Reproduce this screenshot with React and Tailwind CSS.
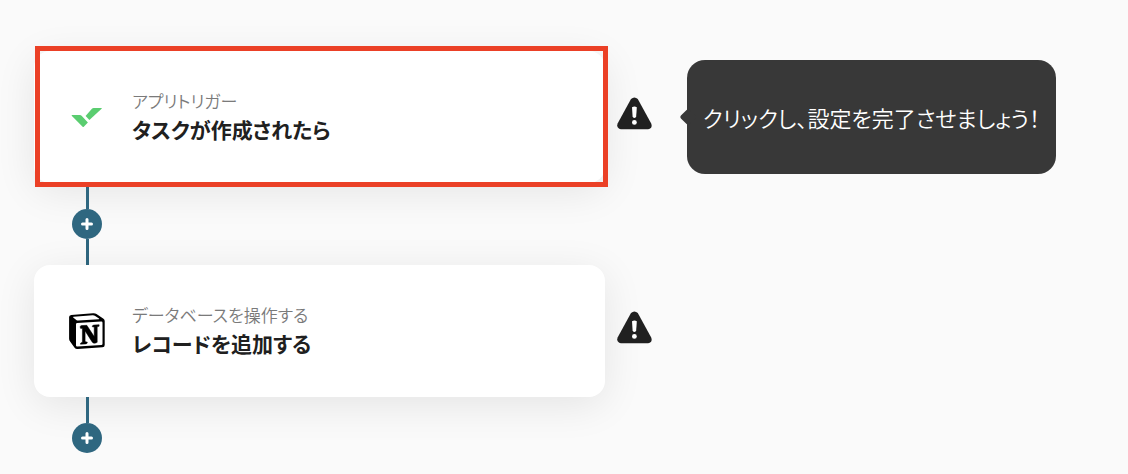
function TaskLogo() {
  return (
    <svg viewBox="0 0 36 36" className="h-9 w-9 shrink-0" fill="#5acd70" aria-hidden="true">
      <path d="M3.2 16h7.7q1 0 1.7.7l6.3 6.9-4.1 4.1q-.6.6-1.2 0L2.7 16.8q-.5-.7.5-.8Z" />
      <path d="M16.6 16.9l6.1-6.9q.8-.9 2-.9h7.6q.9 0 .3.6L20.4 21.1Z" />
    </svg>
  );
}

function NotionLogo() {
  return (
    <svg viewBox="0 0 36 36" className="h-9 w-9 shrink-0" aria-hidden="true">
      <path
        d="M2.2 1.9 24 .2q2-.2 3.5.8l7 4.8q1.2.8 1.2 2.3v23.8q0 2.1-2.2 2.3L8.7 36q-2 .1-3.1-1.3l-4.5-6.1Q.1 27.3.1 25.7V4.1q0-2 2.1-2.2Z"
        fill="#000"
      />
      <path d="M4.6 3.7 23.7 2.2q1.2-.1 2.1.6l4.2 2.8q.6.5-.2.6L9.3 7.5q-1.1.1-2-.6L4.2 4.4q-.5-.5.4-.7Z" fill="#fff" />
      <path d="M8.2 10 32.2 8.6q1.3-.1 1.3 1.1v21q0 1.2-1.2 1.3L8.3 33.5q-1.3.1-1.3-1.1v-21.2q0-1.1 1.2-1.2Z" fill="#fff" />
      <path
        d="M11.2 13.7q.2-1 1.4-1.1l5.2-.3 7.4 11.3v-9.5l-2-.4q.1-1.5 1.6-1.6l5.3-.4v1.5l-1.9.6v15.5q-1.5.9-2.8.9-1.4 0-2.3-1.3l-7-11v10.7l2.3.6q0 1.6-1.7 1.7l-5.3.3q0-1.2.8-1.5l1.2-.4V15.6l-2-.3Z"
        fill="#000"
        stroke="#000"
        strokeWidth=".5"
      />
    </svg>
  );
}

function WarningIcon() {
  return (
    <svg viewBox="0 0 36 40" className="h-10 w-9 shrink-0" role="img" aria-label="未設定">
      <path
        d="M14 2.1Q17.4-1.2 20.8 2.1L34.2 26.4Q36 31.2 31.2 32.2H3.8Q-1 31.2.6 26.4Z"
        fill="#202020"
      />
      <path d="M15 10.2q2.5-1.6 4.8 0l-.6 9q-.2 1.8-1.8 1.8t-1.8-1.8Z" fill="#fff" />
      <circle cx="17.4" cy="25.4" r="2.4" fill="#fff" />
    </svg>
  );
}

function Step({ logo, kind, title, highlighted = false, hint }) {
  return (
    <li>
      <div className="flex items-center">
        <div className="relative max-w-[571px] flex-1">
          <button
            type="button"
            className="flex h-[132px] w-full items-center gap-[27px] rounded-2xl bg-white px-[35px] text-left shadow-[0_8px_40px_rgba(0,0,0,0.09)]"
          >
            {logo}
            <span>
              <span className="block text-[17px] leading-6 font-[350] text-[#7a7a7a]">{kind}</span>
              <span className="block text-[21px] leading-8 font-bold text-[#202020]">{title}</span>
            </span>
          </button>
          {highlighted ? (
            <span className="pointer-events-none absolute -top-[5px] -right-[3px] -bottom-1 left-px z-10 border-5 border-[#eb4026]" />
          ) : null}
        </div>
        <div className="relative ml-3 shrink-0">
          <WarningIcon />
        </div>
        {hint ? (
          <div role="tooltip" className="relative ml-[34px] flex h-[114px] w-[369px] items-center justify-center rounded-[18px] bg-[#383838]">
            <span className="absolute top-1/2 -left-[5px] h-3 w-3 -translate-y-1/2 rotate-45 rounded-xs bg-[#383838]" />
            <p className="relative text-[22px] leading-8 font-[350] whitespace-nowrap text-white">{hint}</p>
          </div>
        ) : null}
      </div>
    </li>
  );
}

function AddStep({ last = false }) {
  return (
    <li className="relative ml-[38px] flex w-[30px] flex-col items-center">
      <span className="h-[26px] w-[3px] bg-[#2f6780]" />
      <button
        type="button"
        aria-label="ステップを追加"
        className="flex h-[30px] w-[30px] items-center justify-center rounded-full bg-[#2f6780]"
      >
        <svg viewBox="0 0 12 12" className="h-3 w-3" stroke="#fff" strokeWidth="3" strokeLinecap="round" aria-hidden="true">
          <path d="M6 1.5v9M1.5 6h9" />
        </svg>
      </button>
      {!last ? <span className="h-[26px] w-[3px] bg-[#2f6780]" /> : null}
    </li>
  );
}

export default function App() {
  return (
    <main
      lang="ja"
      className="min-h-screen bg-[#fafafa] pt-[51px] pr-6 pl-[34px] font-['Noto_Sans_CJK_JP',sans-serif] [font-feature-settings:'palt']"
    >
      <ol>
        <Step
          logo={<TaskLogo />}
          kind="アプリトリガー"
          title="タスクが作成されたら"
          hint="クリックし、設定を完了させましょう！"
          highlighted
        />
        <AddStep />
        <Step logo={<NotionLogo />} kind="データベースを操作する" title="レコードを追加する" />
        <AddStep last />
      </ol>
    </main>
  );
}
